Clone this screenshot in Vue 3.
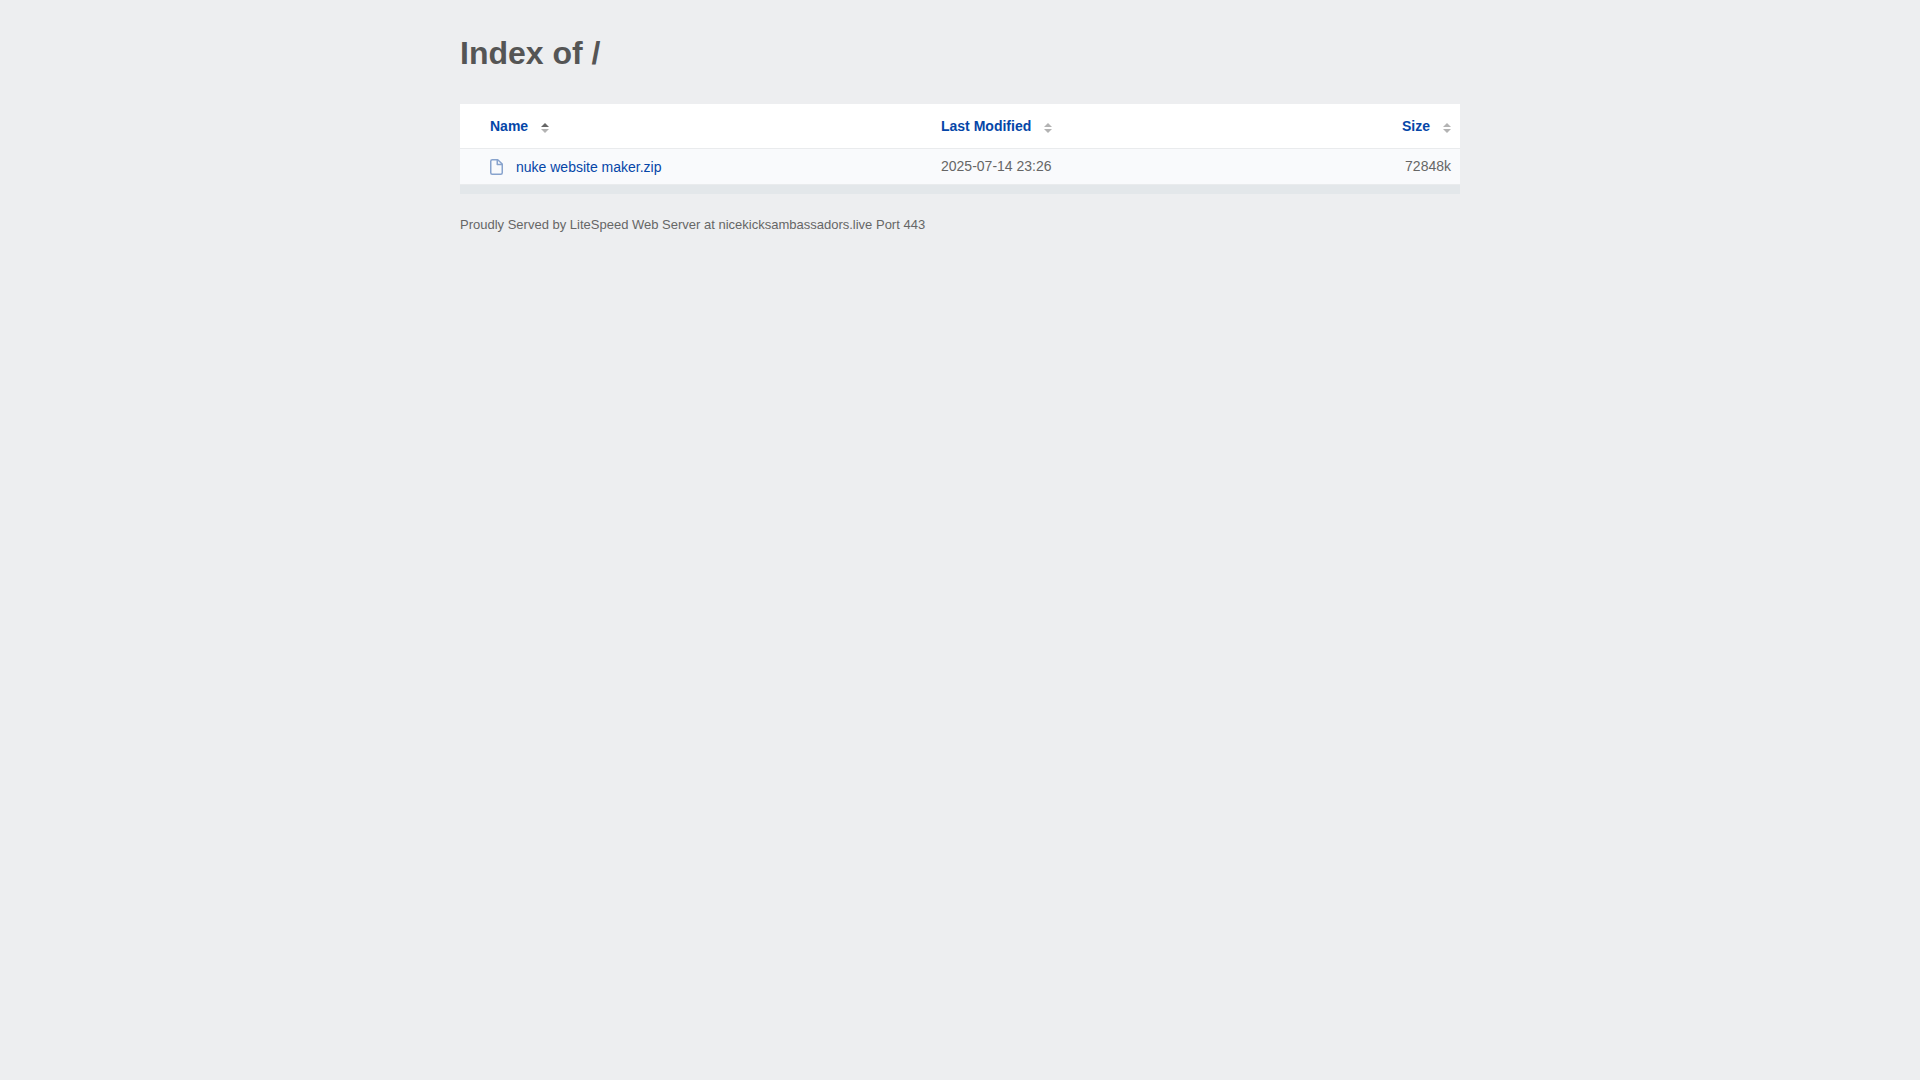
<script setup>
import { computed, ref } from 'vue'

const columns = [
  { key: 'name', label: 'Name' },
  { key: 'modified', label: 'Last Modified' },
  { key: 'size', label: 'Size' },
]
const files = [{ name: 'nuke website maker.zip', modified: '2025-07-14 23:26', size: 72848 }]

const sortKey = ref('name')
const ascending = ref(true)

const sorted = computed(() =>
  [...files].sort((a, b) => (a[sortKey.value] > b[sortKey.value] ? 1 : -1) * (ascending.value ? 1 : -1))
)

function sortBy(key) {
  ascending.value = sortKey.value === key ? !ascending.value : true
  sortKey.value = key
}
</script>

<template>
  <main class="page">
    <h1>Index of /</h1>
    <table>
      <thead>
        <tr>
          <th v-for="col in columns" :key="col.key" :class="col.key" scope="col">
            <button type="button" @click="sortBy(col.key)">
              {{ col.label }}
              <svg class="sort" width="8" height="12" viewBox="0 0 8 12" aria-hidden="true">
                <path :class="{ active: sortKey === col.key && ascending }" d="M0 6L4 2l4 4z" />
                <path :class="{ active: sortKey === col.key && !ascending }" d="M0 8h8l-4 4z" />
              </svg>
            </button>
          </th>
        </tr>
      </thead>
      <tbody>
        <tr v-for="file in sorted" :key="file.name">
          <td class="name">
            <a href="#">
              <svg class="file" width="13" height="16" viewBox="0 0 13 16" aria-hidden="true">
                <path d="M2.250 .75h5.500L12.250 5v8.750q0 1.500-1.500 1.500h-8.500q-1.500 0-1.500-1.500V2.250q0-1.500 1.500-1.500zM7.250 1v4.500h5" />
              </svg>
              <span>{{ file.name }}</span>
            </a>
          </td>
          <td class="modified">{{ file.modified }}</td>
          <td class="size">{{ file.size }}k</td>
        </tr>
      </tbody>
    </table>
    <footer>Proudly Served by LiteSpeed Web Server at nicekicksambassadors.live Port 443</footer>
  </main>
</template>

<style>
body {
  background: #edeef0;
}
</style>

<style scoped>
.page {
  max-width: 1000px;
  margin: 0 auto;
  padding: 32px 20px;
  color: #666;
  font: 14px/20px "Liberation Sans", Arial, sans-serif;
  text-rendering: optimizeSpeed;
}
h1 {
  margin: 0 0 30px;
  color: #555;
  font-size: 32px;
  line-height: 42px;
}
table {
  width: 100%;
  table-layout: fixed;
  border-collapse: separate;
  border-spacing: 0;
  border-bottom: 9px solid #e3e7ea;
  background: #fff;
}
th,
td {
  padding: 0 9px;
  text-align: left;
  border-bottom: 1px solid #e9ebed;
}
th {
  height: 44px;
}
td {
  height: 33px;
  padding-bottom: 2px;
  background: #f9fafc;
}
.name {
  width: 45%;
  box-sizing: border-box;
  padding-left: 30px;
}
td.name {
  height: 36px;
  padding-bottom: 0;
}
.modified {
  width: 30%;
  box-sizing: border-box;
  padding-left: 31px;
}
.size {
  text-align: right;
}
button {
  display: inline-flex;
  align-items: center;
  gap: 13px;
  padding: 0;
  border: 0;
  background: none;
  color: #0546a8;
  font: inherit;
  cursor: pointer;
}
.sort {
  position: relative;
  top: 1px;
  fill: #b3b3b3;
}
.sort .active {
  fill: #666;
}
a {
  display: flex;
  align-items: center;
  gap: 13px;
  color: #0546a8;
  text-decoration: none;
}
a:hover {
  text-decoration: underline;
}
.file {
  fill: none;
  stroke: #88a3cd;
  stroke-width: 1.500;
  stroke-linejoin: round;
}
footer {
  margin-top: 21px;
  font-size: 13px;
}
</style>
